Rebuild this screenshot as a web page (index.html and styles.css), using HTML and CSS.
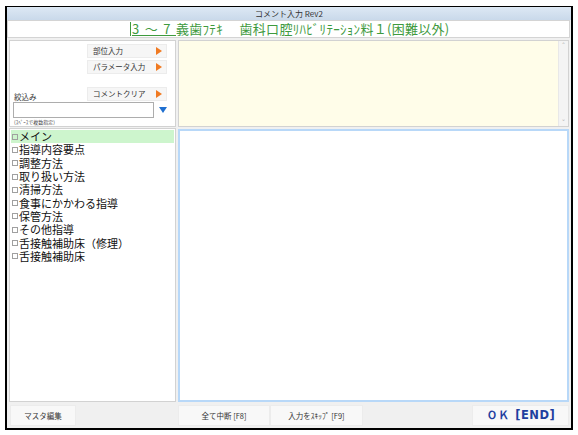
FILE: index.html
```html
<!DOCTYPE html>
<html lang="ja">
<head>
<meta charset="utf-8">
<link rel="stylesheet" href="styles.css">
</head>
<body>
<div class="window">
  <div class="titlebar">コメント入力 Rev2</div>
  <div class="header"><span class="caret"></span><span class="ul">3 ～ 7 </span> 義歯ﾌﾃｷ　 歯科口腔ﾘﾊﾋﾞﾘﾃｰｼｮﾝ料１(困難以外)</div>
  <div class="main">
    <div class="left">
      <div class="controls">
        <div class="btnrow"><div class="sbtn">部位入力<span class="tri"></span></div></div>
        <div class="btnrow"><div class="sbtn">パラメータ入力<span class="tri"></span></div></div>
        <div class="filterrow">
          <span class="flabel">絞込み</span>
          <div class="sbtn">コメントクリア<span class="tri"></span></div>
        </div>
        <div class="inputrow">
          <div class="input"></div>
          <span class="dtri"></span>
        </div>
        <div class="hint">(ｽﾍﾟｰｽで複数指定)</div>
      </div>
      <div class="list">
        <div class="item sel"><span class="cb"></span><span class="lbl">メイン</span></div>
        <div class="item"><span class="cb"></span><span class="lbl">指導内容要点</span></div>
        <div class="item"><span class="cb"></span><span class="lbl">調整方法</span></div>
        <div class="item"><span class="cb"></span><span class="lbl">取り扱い方法</span></div>
        <div class="item"><span class="cb"></span><span class="lbl">清掃方法</span></div>
        <div class="item"><span class="cb"></span><span class="lbl">食事にかかわる指導</span></div>
        <div class="item"><span class="cb"></span><span class="lbl">保管方法</span></div>
        <div class="item"><span class="cb"></span><span class="lbl">その他指導</span></div>
        <div class="item"><span class="cb"></span><span class="lbl">舌接触補助床（修理）</span></div>
        <div class="item"><span class="cb"></span><span class="lbl">舌接触補助床</span></div>
      </div>
    </div>
    <div class="right">
      <div class="memo">
        <div class="scroll"><span class="up">˄</span><span class="dn">˅</span></div>
      </div>
      <div class="text"></div>
    </div>
  </div>
  <div class="footer">
    <div class="fbtn master">マスタ編集</div>
    <div class="fbtn abort">全て中断 [F8]</div>
    <div class="fbtn skip">入力をｽｷｯﾌﾟ [F9]</div>
    <div class="spacer"></div>
    <div class="fbtn ok">ＯＫ [END]</div>
  </div>
</div>
</body>
</html>
```
FILE: styles.css
```css
* { box-sizing: border-box; }
body {
  margin: 0;
  background: #fff;
  font-family: "Noto Sans CJK JP", "DejaVu Sans", sans-serif;
  color: #222;
}
.window {
  margin: 6px 0 0 5px;
  width: 568px;
  height: 424px;
  border: 2px solid #000;
  border-top-width: 1px;
  background: #f0f0f0;
  display: flex;
  flex-direction: column;
}
.titlebar {
  height: 13px;
  background: linear-gradient(#dde8f4, #c9d9ea);
  font-size: 8px;
  line-height: 13px;
  text-align: center;
  color: #333;
}
.header {
  height: 18px;
  margin: 0 1px 0 0;
  background: #fff;
  border: 1px solid #d4d4d4;
  color: #3e9a3e;
  font-size: 13px;
  line-height: 16px;
  padding-left: 122px;
  letter-spacing: 0.3px;
  white-space: nowrap;
}
.caret {
  display: inline-block;
  width: 1px;
  height: 14px;
  background: #3e9a3e;
  vertical-align: -2px;
  margin-right: 1px;
}
.ul { text-decoration: underline; word-spacing: 2px; }
.main {
  flex: 1;
  display: flex;
  gap: 2px;
  padding: 2px 2px 0 2px;
}
.left {
  width: 167px;
  display: flex;
  flex-direction: column;
  gap: 1px;
}
.controls {
  height: 87px;
  background: #fff;
  border: 1px solid #d2d2d2;
  padding: 3px 0 0 3px;
}
.btnrow { display: flex; padding-left: 74px; margin-bottom: 2px; }
.sbtn {
  width: 80px;
  height: 14px;
  background: #f6f6f6;
  border: 1px solid #ececec;
  font-size: 7.5px;
  line-height: 12px;
  padding-left: 5px;
  color: #333;
  display: flex;
  justify-content: space-between;
  align-items: center;
}
.tri {
  width: 0; height: 0;
  border-top: 4px solid transparent;
  border-bottom: 4px solid transparent;
  border-left: 6px solid #f07a22;
  margin-right: 4px;
}
.filterrow {
  display: flex;
  align-items: flex-end;
  margin-top: 13px;
  height: 14px;
}
.flabel { font-size: 7.5px; width: 74px; line-height: 9px; padding-left: 1px; color: #333; }
.inputrow { display: flex; align-items: center; margin-top: 1px; }
.input {
  width: 141px;
  height: 16px;
  border: 1px solid #adadad;
  background: #fff;
}
.dtri {
  margin-left: 5px;
  width: 0; height: 0;
  border-left: 4px solid transparent;
  border-right: 4px solid transparent;
  border-top: 6px solid #1f6fd0;
}
.hint { font-size: 5px; color: #444; line-height: 7px; padding-left: 1px; }
.list {
  flex: 1;
  background: #fff;
  border: 1px solid #d2d2d2;
  padding: 1px 1px 0 1px;
}
.item {
  height: 13.3px;
  font-size: 11px;
  color: #111;
  display: flex;
  align-items: center;
  white-space: nowrap;
}
.lbl { line-height: 13px; }
.item.sel { background: #cdf5cd; }
.cb {
  width: 6px; height: 6px;
  border: 1px solid #a0a0a0;
  margin: 0 1px 0 1px;
  flex: none;
}
.right {
  flex: 1;
  display: flex;
  flex-direction: column;
  gap: 2px;
}
.memo {
  height: 87px;
  background: #fffde9;
  border: 1px solid #d2d2d2;
  display: flex;
  justify-content: flex-end;
}
.scroll {
  width: 10px;
  background: #f4f4f4;
  border-left: 1px solid #e8e8e8;
  display: flex;
  flex-direction: column;
  justify-content: space-between;
  align-items: center;
  font-size: 7px;
  color: #aaa;
  line-height: 8px;
}
.text {
  flex: 1;
  background: #fff;
  border: 2px solid #b8d8f8;
}
.footer {
  height: 26px;
  display: flex;
  align-items: center;
  padding: 0 2px 0 3px;
}
.fbtn {
  height: 21px;
  background: #f8f8f8;
  border: 1px solid #ececec;
  font-size: 7.5px;
  line-height: 19px;
  text-align: center;
  color: #333;
}
.master { width: 66px; }
.abort { width: 92px; margin-left: 102px; }
.skip { width: 93px; }
.spacer { flex: 1; }
.ok {
  width: 97px;
  font-family: "DejaVu Sans", sans-serif;
  font-weight: bold;
  font-size: 11.5px;
  color: #1f3f9f;
  letter-spacing: 0.5px;
}
```
